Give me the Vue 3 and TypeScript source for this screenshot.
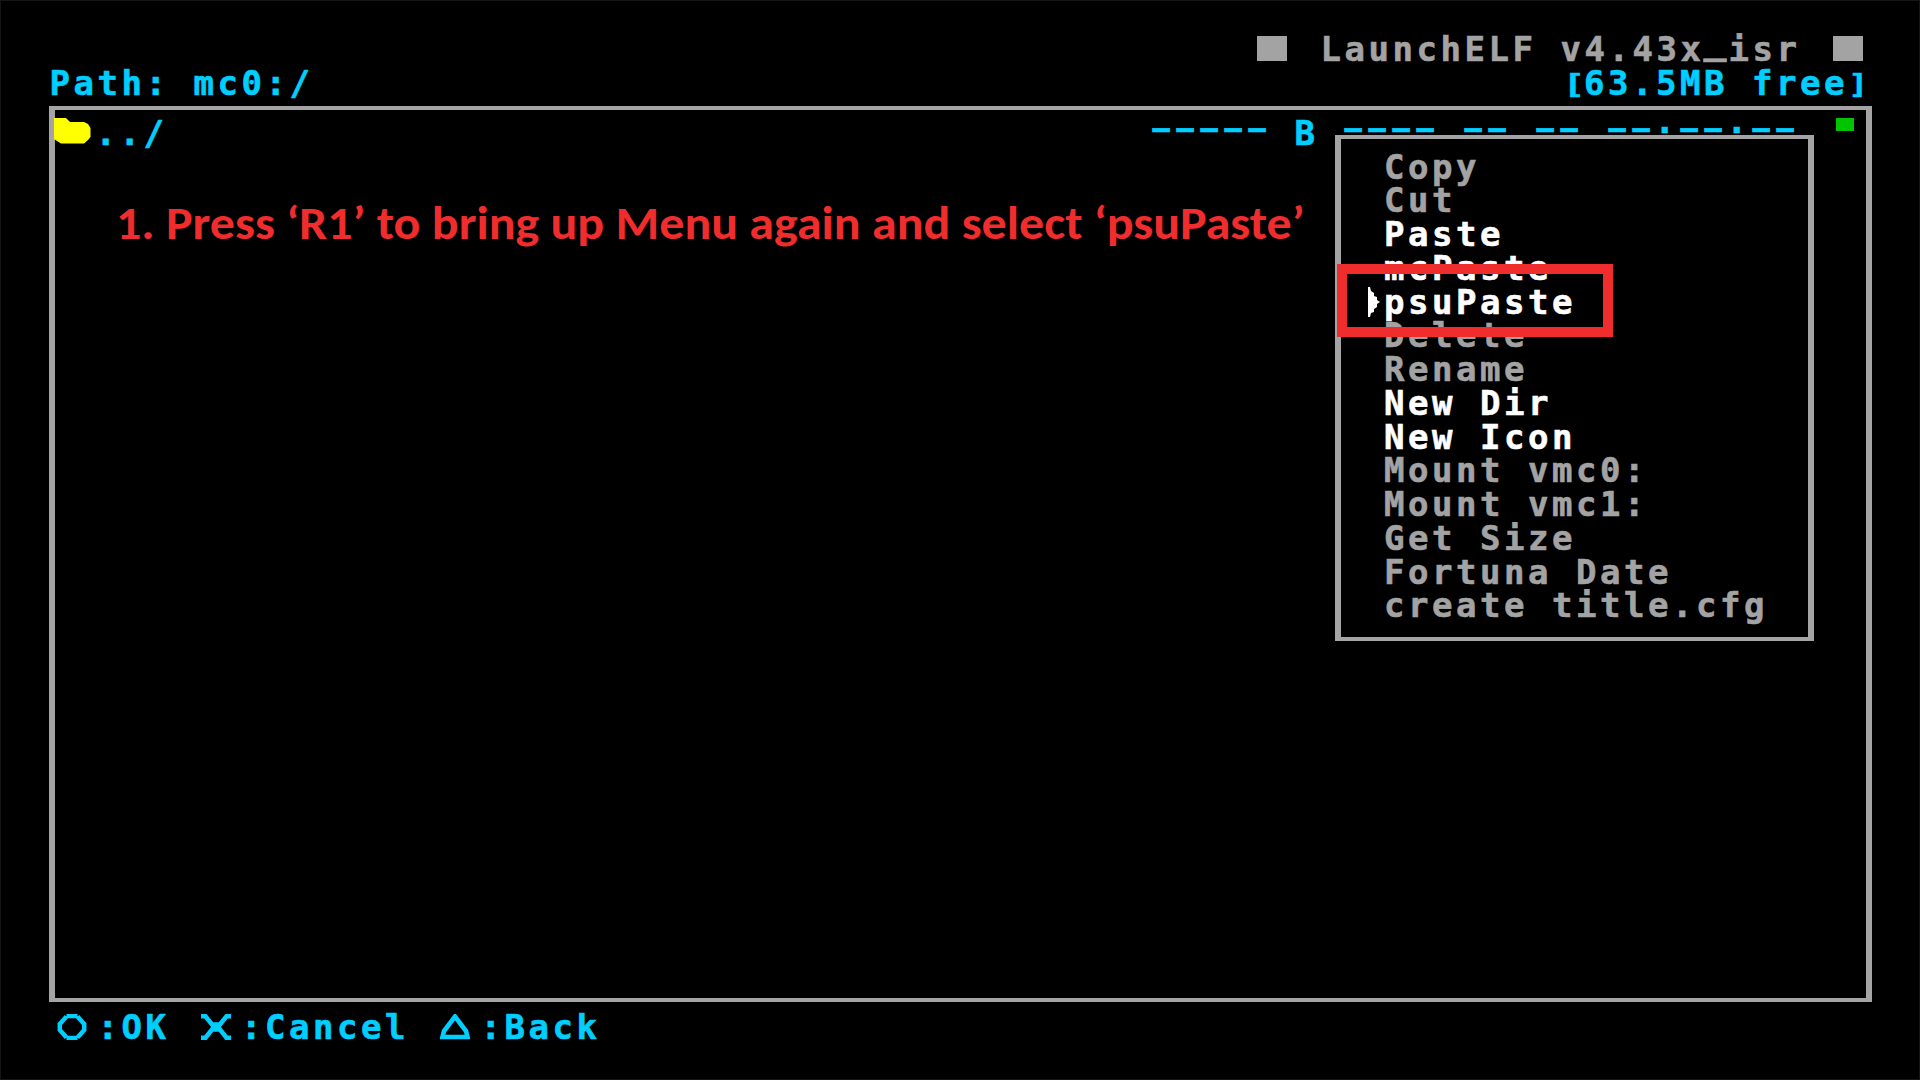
<script setup lang="ts">
interface MenuItem {
  label: string
  enabled: boolean
}

interface Hint {
  icon: 'circle' | 'cross' | 'triangle'
  label: string
}

const menu: MenuItem[] = [
  { label: 'Copy', enabled: false },
  { label: 'Cut', enabled: false },
  { label: 'Paste', enabled: true },
  { label: 'mcPaste', enabled: true },
  { label: 'psuPaste', enabled: true },
  { label: 'Delete', enabled: false },
  { label: 'Rename', enabled: false },
  { label: 'New Dir', enabled: true },
  { label: 'New Icon', enabled: true },
  { label: 'Mount vmc0:', enabled: false },
  { label: 'Mount vmc1:', enabled: false },
  { label: 'Get Size', enabled: false },
  { label: 'Fortuna Date', enabled: false },
  { label: 'create title.cfg', enabled: false },
]
const selected = 'psuPaste'

const hints: Hint[] = [
  { icon: 'circle', label: ':OK' },
  { icon: 'cross', label: ':Cancel' },
  { icon: 'triangle', label: ':Back' },
]

const details = [...'----- B ---- -- -- --:--:--']
</script>

<template>
  <main class="screen">
    <header>
      <div class="line title">
        <i class="block"></i>
        <span class="name">LaunchELF v4.43x<span class="low">_</span>isr</span>
        <i class="block"></i>
      </div>
      <div class="line status">
        <span>Path: mc0:/</span>
        <span class="free"><span class="br open">[</span>63.5MB free<span class="br">]</span></span>
      </div>
    </header>

    <section class="frame">
      <div class="line row">
        <svg class="folder" width="37" height="26" viewBox="0 0 37 26">
          <path d="M0 0H12L14 2L16 4H30L34 6L36.500 10V19L34 22L30 25.500H7L3 23L0 21Z" fill="#ff0" />
        </svg>
        <span class="entry">../</span>
        <span class="details"><span v-for="(c, i) in details" :key="i" :class="{ dash: c === '-' }">{{ c }}</span></span>
        <i class="led"></i>
      </div>

      <nav class="menu">
        <div v-for="m in menu" :key="m.label" class="item" :class="{ on: m.enabled }">
          <svg v-if="m.label === selected" class="pointer" width="12" height="30" viewBox="0 0 12 30">
            <path d="M0 0H2L3 4L6 6V9L9 10V13L12 15L9 17V20L6 22V25L3 26L2 30H0Z" fill="#fff" />
          </svg>{{ m.label }}
        </div>
      </nav>
    </section>

    <footer class="line">
      <span v-for="h in hints" :key="h.icon" class="hint">
        <svg class="pad" width="30" height="26" viewBox="0 0 30 26" fill="none" stroke="#00ceff">
          <path v-if="h.icon === 'circle'" d="M9.500 2H20.500M9.500 24H20.500M9.500 2.500L2.800 10V16L9.500 23.500M20.500 2.500L27.200 10V16L20.500 23.500" stroke-width="4.500" />
          <path v-else-if="h.icon === 'cross'" d="M0 2.300H4.500L11 10.500H19L25.500 2.300H30M0 23.700H4.500L11 15.500H19L25.500 23.700H30M10 13H20" stroke-width="4.600" />
          <path v-else d="M15 2.500L4 17L2.500 23H27.500L26 17Z" stroke-width="4.600" />
        </svg>
        <span>{{ h.label }}</span>
      </span>
    </footer>

    <p class="caption">1. Press ‘R1’ to bring up Menu again and select ‘psuPaste’</p>
    <div class="highlight"></div>
  </main>
</template>

<style>
body {
  margin: 0;
  background: #000;
}
</style>

<style scoped>
.screen {
  position: relative;
  box-sizing: border-box;
  width: 1920px;
  height: 1080px;
  padding: 31px 47px 0 47.500px;
  border: 1px solid #141414;
  overflow: hidden;
  background: #000;
  color: #00ceff;
  font: bold 34px/34px "DejaVu Sans Mono", monospace;
  letter-spacing: 3.53px;
  white-space: pre;
  -webkit-text-stroke: 0.6px;
}
.line {
  display: flex;
  height: 34px;
}
.title {
  justify-content: flex-end;
  padding-right: 9.500px;
  color: #a3a3a3;
}
.block {
  width: 30px;
  height: 25px;
  margin-top: 4px;
  background: #a3a3a3;
}
.name {
  margin: 0 32px 0 34px;
}
.low {
  display: inline-block;
  transform: translateY(-7px) scaleX(1.12);
}
.status {
  justify-content: space-between;
  padding: 0 0 0 1px;
}
.br {
  display: inline-block;
  transform: scaleY(0.78);
  transform-origin: 50% 56%;
}
.open {
  transform: translateX(4px) scale(1.1, 0.78);
}
.frame {
  position: relative;
  box-sizing: border-box;
  width: 1823.500px;
  height: 896.500px;
  margin-top: 5.500px;
  border: solid #a4a4a4;
  border-width: 4.500px 6px;
}
.row {
  padding-top: 6px;
}
.folder {
  margin: 2px 0 0 -1px;
}
.entry {
  margin-left: 5px;
}
.details {
  margin-left: auto;
  margin-right: 37.500px;
}
.details span {
  display: inline-block;
}
.details .dash {
  transform: translate(1px, -4.500px) scale(1.6, 0.8);
}
.led {
  width: 18px;
  height: 13px;
  margin: 2px 12px 0 0;
  background: #00c400;
}
.menu {
  position: absolute;
  left: 1280.500px;
  top: 25.500px;
  box-sizing: border-box;
  width: 479px;
  height: 506px;
  padding: 11.500px 0 0 43px;
  border: solid #a4a4a4;
  border-width: 4.500px 6px;
  background: #000;
  color: #a3a3a3;
}
.item {
  position: relative;
  height: 33.760px;
  line-height: 33.760px;
}
.on {
  color: #fff;
}
.pointer {
  position: absolute;
  left: -16px;
  top: 1px;
}
footer {
  margin-top: 8px;
}
.hint {
  display: flex;
  margin-right: 22.500px;
}
.pad {
  margin: 4px 10.500px 0 8.500px;
}
.caption {
  position: absolute;
  left: 115px;
  top: 194px;
  margin: 0;
  color: #f02d2d;
  font: bold 46px/56px Carlito, Lato, sans-serif;
  letter-spacing: 0;
  -webkit-text-stroke: 0;
  transform: scaleX(1.087);
  transform-origin: 0 0;
}
.highlight {
  position: absolute;
  left: 1336px;
  top: 263px;
  box-sizing: border-box;
  width: 276px;
  height: 73px;
  border: 10px solid #ef2d2d;
}
</style>
